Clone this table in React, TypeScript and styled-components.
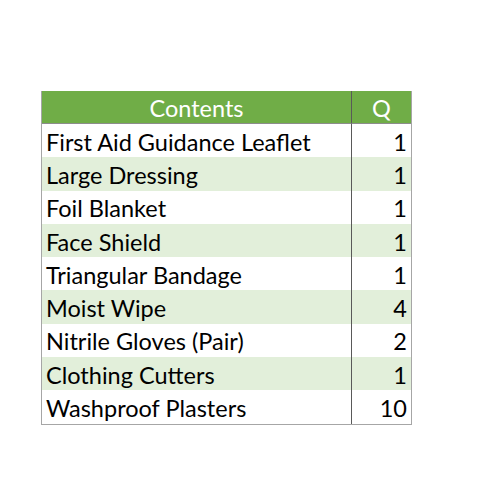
import React from "react";
import styled, { createGlobalStyle } from "styled-components";

const Global = createGlobalStyle`
  html, body { margin: 0; padding: 0; background: #ffffff; }
  body { font-family: Lato, "Open Sans", sans-serif; }
`;

const Page = styled.div`
  width: 495px;
  height: 500px;
  padding: 91px 0 0 41px;
  box-sizing: border-box;
`;

const Table = styled.div`
  width: fit-content;
  display: grid;
  grid-template-columns: 310px 59px;
  border-left: 1px solid #a6a6a6;
  border-right: 1px solid #a6a6a6;
  border-bottom: 1px solid #a6a6a6;
`;

const HeadCell = styled.div<{ $last?: boolean }>`
  height: 33px;
  padding-top: 2px;
  background: #70ad47;
  color: #ffffff;
  font-size: 23.5px;
  display: flex;
  align-items: center;
  justify-content: center;
  border-bottom: 1px solid #8c8c8c;
  border-right: ${(p) => (p.$last ? "none" : "1px solid #595959")};
  box-sizing: border-box;
`;

const Cell = styled.div<{ $alt: boolean; $num?: boolean }>`
  height: 33.3px;
  background: ${(p) => (p.$alt ? "#e2efda" : "#ffffff")};
  color: #000000;
  font-size: 23.5px;
  display: flex;
  align-items: center;
  justify-content: ${(p) => (p.$num ? "flex-end" : "flex-start")};
  padding: ${(p) => (p.$num ? "2px 4px 0 0" : "2px 0 0 4px")};
  border-right: ${(p) => (p.$num ? "none" : "1px solid #595959")};
  box-sizing: border-box;
  white-space: nowrap;
`;

const rows: [string, string][] = [
  ["First Aid Guidance Leaflet", "1"],
  ["Large Dressing", "1"],
  ["Foil Blanket", "1"],
  ["Face Shield", "1"],
  ["Triangular Bandage", "1"],
  ["Moist Wipe", "4"],
  ["Nitrile Gloves (Pair)", "2"],
  ["Clothing Cutters", "1"],
  ["Washproof Plasters", "10"],
];

export default function App() {
  return (
    <Page>
      <Global />
      <Table>
        <HeadCell>Contents</HeadCell>
        <HeadCell $last>Q</HeadCell>
        {rows.map(([name, q], i) => (
          <React.Fragment key={name}>
            <Cell $alt={i % 2 === 1}>{name}</Cell>
            <Cell $alt={i % 2 === 1} $num>
              {q}
            </Cell>
          </React.Fragment>
        ))}
      </Table>
    </Page>
  );
}
